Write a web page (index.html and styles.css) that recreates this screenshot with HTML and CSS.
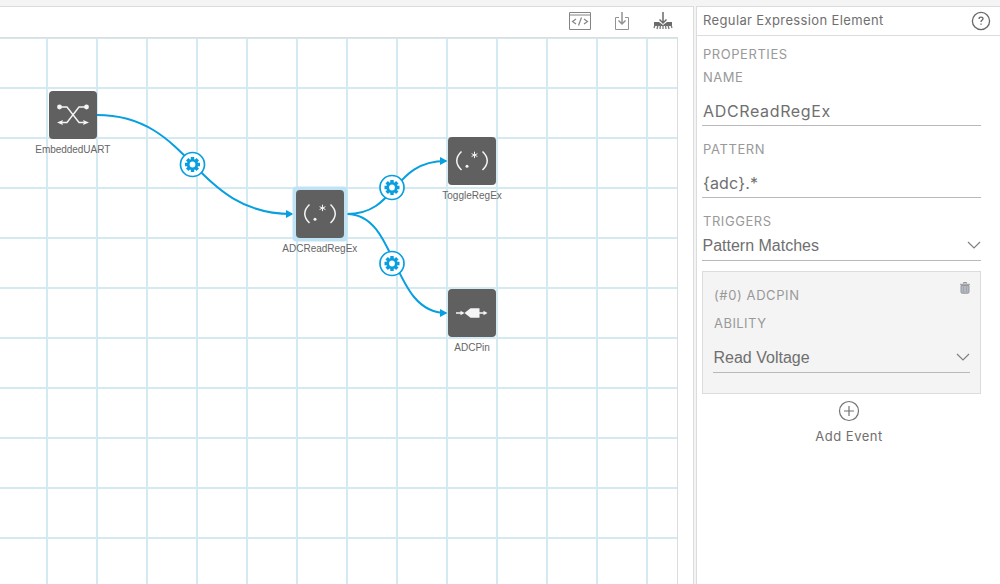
FILE: index.html
```html
<!DOCTYPE html>
<html lang="en">
<head>
<meta charset="utf-8">
<title>Regular Expression Element</title>
<link rel="stylesheet" href="styles.css">
</head>
<body>
<div class="app">
  <main class="workspace">
    <div class="toolbar">
      <svg class="tool" width="24" height="22" viewBox="0 0 24 22" fill="none" stroke="#848484"><path d="M1.500 2.500h21v17h-21zM2 5h20"/><path d="M8 9l-3.500 2.500 3.500 2.500M16 9l3.500 2.500-3.500 2.500M13.500 7.500l-3 8" stroke-width="1.200"/></svg>
      <svg class="tool" width="18" height="22" viewBox="0 0 18 22" fill="none" stroke="#929292"><path d="M6 7.500H2.500v12h13v-12H12"/><path d="M9 2v12M5.500 10.500L9 14l3.500-3.500" stroke-width="1.500"/></svg>
      <svg class="tool" width="22" height="22" viewBox="0 0 22 22"><path d="M2 12h5l4 3 4-3h5v4H2z" fill="#6b6b6b"/><path d="M11 2v11M7.500 9.500l3.500 3.500 3.500-3.500" fill="none" stroke="#6b6b6b" stroke-width="1.500"/><path d="M3 15l-1 3M6 15l-1 4M8.500 15l-.5 4M11 15v4M13.500 15l.5 4M16 15l1 4M19 15l1 3" stroke="#777" stroke-width="1.300"/></svg>
    </div>
    <div class="canvas">
      <svg class="flow" width="677" height="546" viewBox="0 38 677 546">
        <defs>
          <pattern id="grid" width="50" height="50" x="46" y="37" patternUnits="userSpaceOnUse"><path d="M0 1h50M1 0v50" stroke="#a8d5e5" stroke-opacity=".5" stroke-width="2"/></pattern>
          <marker id="arrow" markerUnits="userSpaceOnUse" markerWidth="8" markerHeight="8" refX="6" refY="4" orient="auto"><path d="M0 0l7.500 4L0 8z" fill="#079fe0"/></marker>
          <g id="gear"><circle r="12" fill="#fff" stroke="#079fe0" stroke-width="1.700"/><g fill="#079fe0"><path id="teeth" d="M-1.700-7.500h3.400v15h-3.400zM-7.500-1.700h15v3.400h-15z"/><use href="#teeth" transform="rotate(45)"/><circle r="5.600"/></g><circle r="2.900" fill="#fff"/></g>
          <g id="regex" fill="none" stroke="#f5f5f5" stroke-width="1.500"><path d="M-10.500-9q-9.500 9 0 18.500M10.500-9q9.500 9 0 18.500"/><path d="M2.500-8.800v6.400M-.4-6.800l5.800 2.800M5.400-6.800l-5.800 2.800" stroke-width="1"/><circle cx="-5" cy="5.700" r="1.500" fill="#f5f5f5" stroke="none"/></g>
        </defs>
        <rect y="38" width="677" height="546" fill="url(#grid)"/>
        <g class="links">
          <path d="M97 115C193 115 193 214 292 214" marker-end="url(#arrow)"/>
          <path d="M347 214C398 214 391 161 446 161" marker-end="url(#arrow)"/>
          <path d="M347 214C398 214 391 313 446 313" marker-end="url(#arrow)"/>
        </g>
        <use href="#gear" x="192.500" y="164.500"/><use href="#gear" x="392" y="187.500"/><use href="#gear" x="392" y="263.500"/>
        <rect x="292.500" y="186.500" width="55" height="55" rx="4" fill="#bfe3f4"/>
        <g fill="#606060"><rect x="49" y="91" width="48" height="48" rx="4"/><rect x="296" y="190" width="48" height="48" rx="4"/><rect x="448" y="137" width="48" height="48" rx="4"/><rect x="448" y="289" width="48" height="48" rx="4"/></g>
        <g stroke="#f5f5f5" fill="none" stroke-width="1.400"><path d="M60 107h7l12 15.500h7M86 107h-7l-12 15.500h-7"/><g fill="#f5f5f5" stroke="none"><circle cx="59.500" cy="107" r="2.400"/><circle cx="86.500" cy="107" r="2.400"/><path d="M57 122.500l6-2.500-1 2.500 1 2.500zM89 122.500l-6-2.500 1 2.500-1 2.500z"/></g></g>
        <use href="#regex" x="320" y="213.500"/><use href="#regex" x="472" y="160.500"/>
        <g fill="#f5f5f5"><path d="M464.500 313l6-4.700H479.500v9.400h-9z"/><path d="M456 312.300h4.500v-1.500l4 2.200-4 2.200v-1.500H456zM479 312.300h4.500v-1.500l4 2.200-4 2.200v-1.500H479z"/></g>
        <g class="labels"><text x="35.300" y="153" textLength="75">EmbeddedUART</text><text x="282.300" y="252" textLength="75">ADCReadRegEx</text><text x="442.300" y="199" textLength="59.500">ToggleRegEx</text><text x="454.300" y="351" textLength="35.500">ADCPin</text></g>
      </svg>
    </div>
  </main>
  <aside class="inspector">
    <header class="header"><span class="title">Regular Expression Element</span>
      <svg width="20" height="20" viewBox="0 0 20 20" fill="none" stroke="#686868" stroke-width="1.300"><circle cx="10" cy="10" r="8.600"/><path d="M8 8q0-1.800 2-1.800t2 1.600q0 1.100-1.200 1.600-.8.500-.8 1.600M10 12.500v1.300"/></svg>
    </header>
    <div class="properties">
      <div class="caption section">PROPERTIES</div>
      <div class="caption name">NAME</div>
      <div class="field input id">ADCReadRegEx</div>
      <div class="caption pattern">PATTERN</div>
      <div class="field input expression">{adc}.*</div>
      <div class="caption triggers">TRIGGERS</div>
      <div class="field select">Pattern Matches<svg width="14" height="9" viewBox="0 0 14 9"><path d="M1 1l6 6 6-6"/></svg></div>
      <section class="event">
        <div class="event-head"><span class="caption event-name">(#0) ADCPIN</span>
          <svg width="10" height="12" viewBox="0 0 10 12"><path d="M3.500 1.500v-1h3v1M0 2.300h10M1 3.500h8V10q0 1.200-1 1.200H2Q1 11.200 1 10z" fill="#b2b8c2" stroke="#969696"/><path d="M3.500 4.500v5.500M6.500 4.500v5.500" stroke="#9fa5b2"/></svg>
        </div>
        <div class="caption ability">ABILITY</div>
        <div class="field select voltage">Read Voltage<svg width="14" height="9" viewBox="0 0 14 9"><path d="M1 1l6 6 6-6"/></svg></div>
      </section>
      <div class="add-event">
        <svg width="22" height="22" viewBox="0 0 22 22" fill="none" stroke="#737373" stroke-width="1.200"><circle cx="11" cy="11" r="9.500"/><path d="M6 11h10M11 6v10"/></svg>
        <span>Add Event</span>
      </div>
    </div>
  </aside>
</div>
</body>
</html>
```
FILE: styles.css
```css
* { box-sizing: border-box; }
body { margin: 0; background: #f4f4f4; }
svg { display: block; flex: none; }
.app { display: flex; gap: 2px; height: 584px; padding-top: 6px; overflow: hidden; font-family: Inter, sans-serif; color: #6f6f6f; }
.workspace { width: 694px; background: #fff; border: solid #dcdcdc; border-width: 1px 1px 0 0; }
.toolbar { display: flex; height: 30px; justify-content: flex-end; align-items: flex-start; gap: 21px; padding: 3px 19px 0 0; }
.canvas { width: 678px; height: 547px; border: solid #dcdcdc; border-width: 1px 1px 0 0; }
.links { fill: none; stroke: #079fe0; stroke-width: 2; }
.labels { font: 10px "Liberation Sans", sans-serif; fill: #666; }
.inspector { flex: 1; background: #fff; border: solid #dcdcdc; border-width: 1px 0 0 1px; }
.header { height: 29px; border-bottom: 1px solid #dcdcdc; display: flex; justify-content: space-between; align-items: center; padding: 0 9px 0 6px; }
.title { font-size: 13px; line-height: 18px; margin-top: -2px; letter-spacing: .37px; white-space: nowrap; }
.properties { padding: 9px 19px 0 5px; }
.caption { font-size: 13px; line-height: 18px; letter-spacing: .3px; color: #999; white-space: nowrap; padding-left: 1px; }
.section { letter-spacing: .55px; }
.name { margin-top: 5px; letter-spacing: .5px; }
.field { border-bottom: 1px solid #b9b9b9; }
.input { height: 40px; padding: 15px 0 0 1px; font-size: 16px; line-height: 20px; letter-spacing: .65px; }
.expression { letter-spacing: .15px; }
.pattern { margin-top: 14px; letter-spacing: .6px; }
.triggers { margin-top: 14px; letter-spacing: .55px; }
.select { display: flex; height: 31px; justify-content: space-between; align-items: center; padding: 1px 0 0 .5px; font: 16px "Liberation Sans", Arial, sans-serif; }
.select svg { fill: none; stroke: #808080; stroke-width: 1.2; }
.event { height: 123px; margin-top: 10px; padding: 14px 10px 0; background: #f4f4f4; border: 1px solid #dcdcdc; }
.event-head { display: flex; justify-content: space-between; align-items: flex-start; }
.event-head svg { margin-top: -4px; }
.event-name { letter-spacing: .6px; }
.ability { margin-top: 10px; letter-spacing: .45px; }
.voltage { margin-top: 10px; }
.add-event { display: flex; flex-direction: column; align-items: center; margin-top: 6px; padding-left: 15px; font-size: 13px; letter-spacing: .5px; line-height: 18px; gap: 5px; }
```
